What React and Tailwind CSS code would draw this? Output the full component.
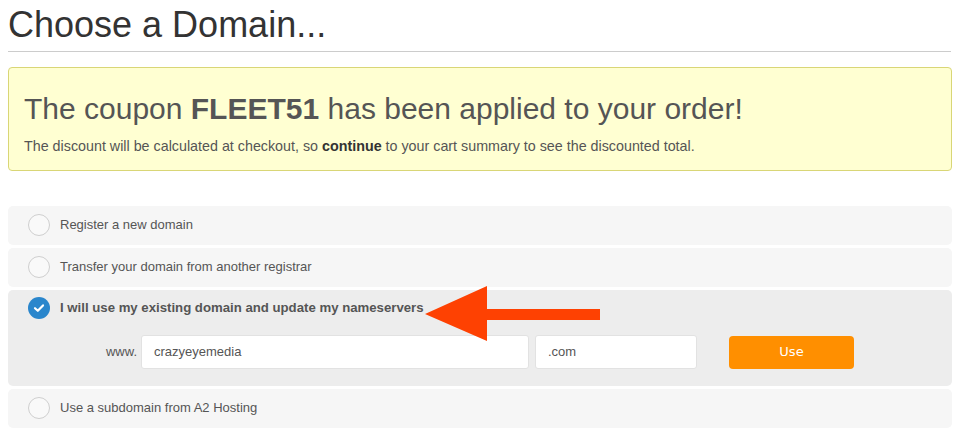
import React from 'react';

const Radio = ({ checked }) =>
  checked ? (
    <span className="flex h-[22px] w-[22px] shrink-0 items-center justify-center rounded-full bg-[#2a86cc]">
      <svg width="12" height="10" viewBox="0 0 12 10" fill="none">
        <path d="M2 5.2 L4.8 7.8 L10 2.4" stroke="#fff" strokeWidth="2.2" strokeLinecap="round" strokeLinejoin="round" />
      </svg>
    </span>
  ) : (
    <span className="h-[22px] w-[22px] shrink-0 rounded-full border border-[#cfcfcf] bg-[#f9f9f9]" />
  );

const Option = ({ label }) => (
  <div className="flex h-[39px] items-center gap-[10px] rounded-[5px] bg-[#f6f6f6] pb-[2px] pl-[20px]">
    <Radio />
    <span className="text-[13px] text-[#555]">{label}</span>
  </div>
);

const App = () => {
  return (
    <div className="relative min-h-[435px] w-[972px] bg-white px-[8px] font-['Liberation_Sans',Arial,sans-serif]">
      <h1 className="mt-[7px] w-[943px] border-b border-[#cccccc] pb-[8px] text-[36px] leading-none text-[#333]">
        Choose a Domain...
      </h1>

      <div className="mt-[15px] w-[944px] rounded-[4px] border border-[#d9d676] bg-[#ffffd2] px-[15px] pb-[17px] pt-[26px] text-[#555]">
        <h2 className="text-[30px] leading-none">
          The coupon <strong>FLEET51</strong> has been applied to your order!
        </h2>
        <p className="mt-[15px] text-[14.3px] leading-[14px]">
          The discount will be calculated at checkout, so <strong className="text-[#333]">continue</strong> to your cart summary to see the discounted total.
        </p>
      </div>

      <div className="mt-[35px] flex w-[944px] flex-col gap-[3px]">
        <Option label="Register a new domain" />
        <Option label="Transfer your domain from another registrar" />

        <div className="rounded-[5px] bg-[#ededed] pb-[17px]">
          <div className="flex h-[35px] items-center gap-[10px] pl-[20px]">
            <Radio checked />
            <span className="text-[13.2px] font-bold text-[#555]">
              I will use my existing domain and update my nameservers
            </span>
          </div>
          <div className="flex items-center pt-[10px]">
            <span className="w-[133px] pr-[4px] text-right text-[13px] text-[#555]">www.</span>
            <div className="flex h-[34px] w-[388px] items-center rounded-[3px] border border-[#e2e2e2] bg-white px-[12px] text-[13px] text-[#555]">
              crazyeyemedia
            </div>
            <div className="ml-[6px] flex h-[34px] w-[162px] items-center rounded-[3px] border border-[#e2e2e2] bg-white px-[12px] text-[13px] text-[#555]">
              .com
            </div>
            <button className="ml-[32px] h-[33px] w-[125px] rounded-[4px] bg-[#ff8f00] font-['DejaVu_Sans',Verdana,sans-serif] text-[13px] text-white">
              Use
            </button>
          </div>
        </div>

        <Option label="Use a subdomain from A2 Hosting" />
      </div>

      <svg className="pointer-events-none absolute left-0 top-0" width="972" height="435">
        <polygon points="425,307 487,279 487,302 600,302 600,313 487,313 487,334" fill="#fe4102" />
      </svg>
    </div>
  );
};

export default App;
